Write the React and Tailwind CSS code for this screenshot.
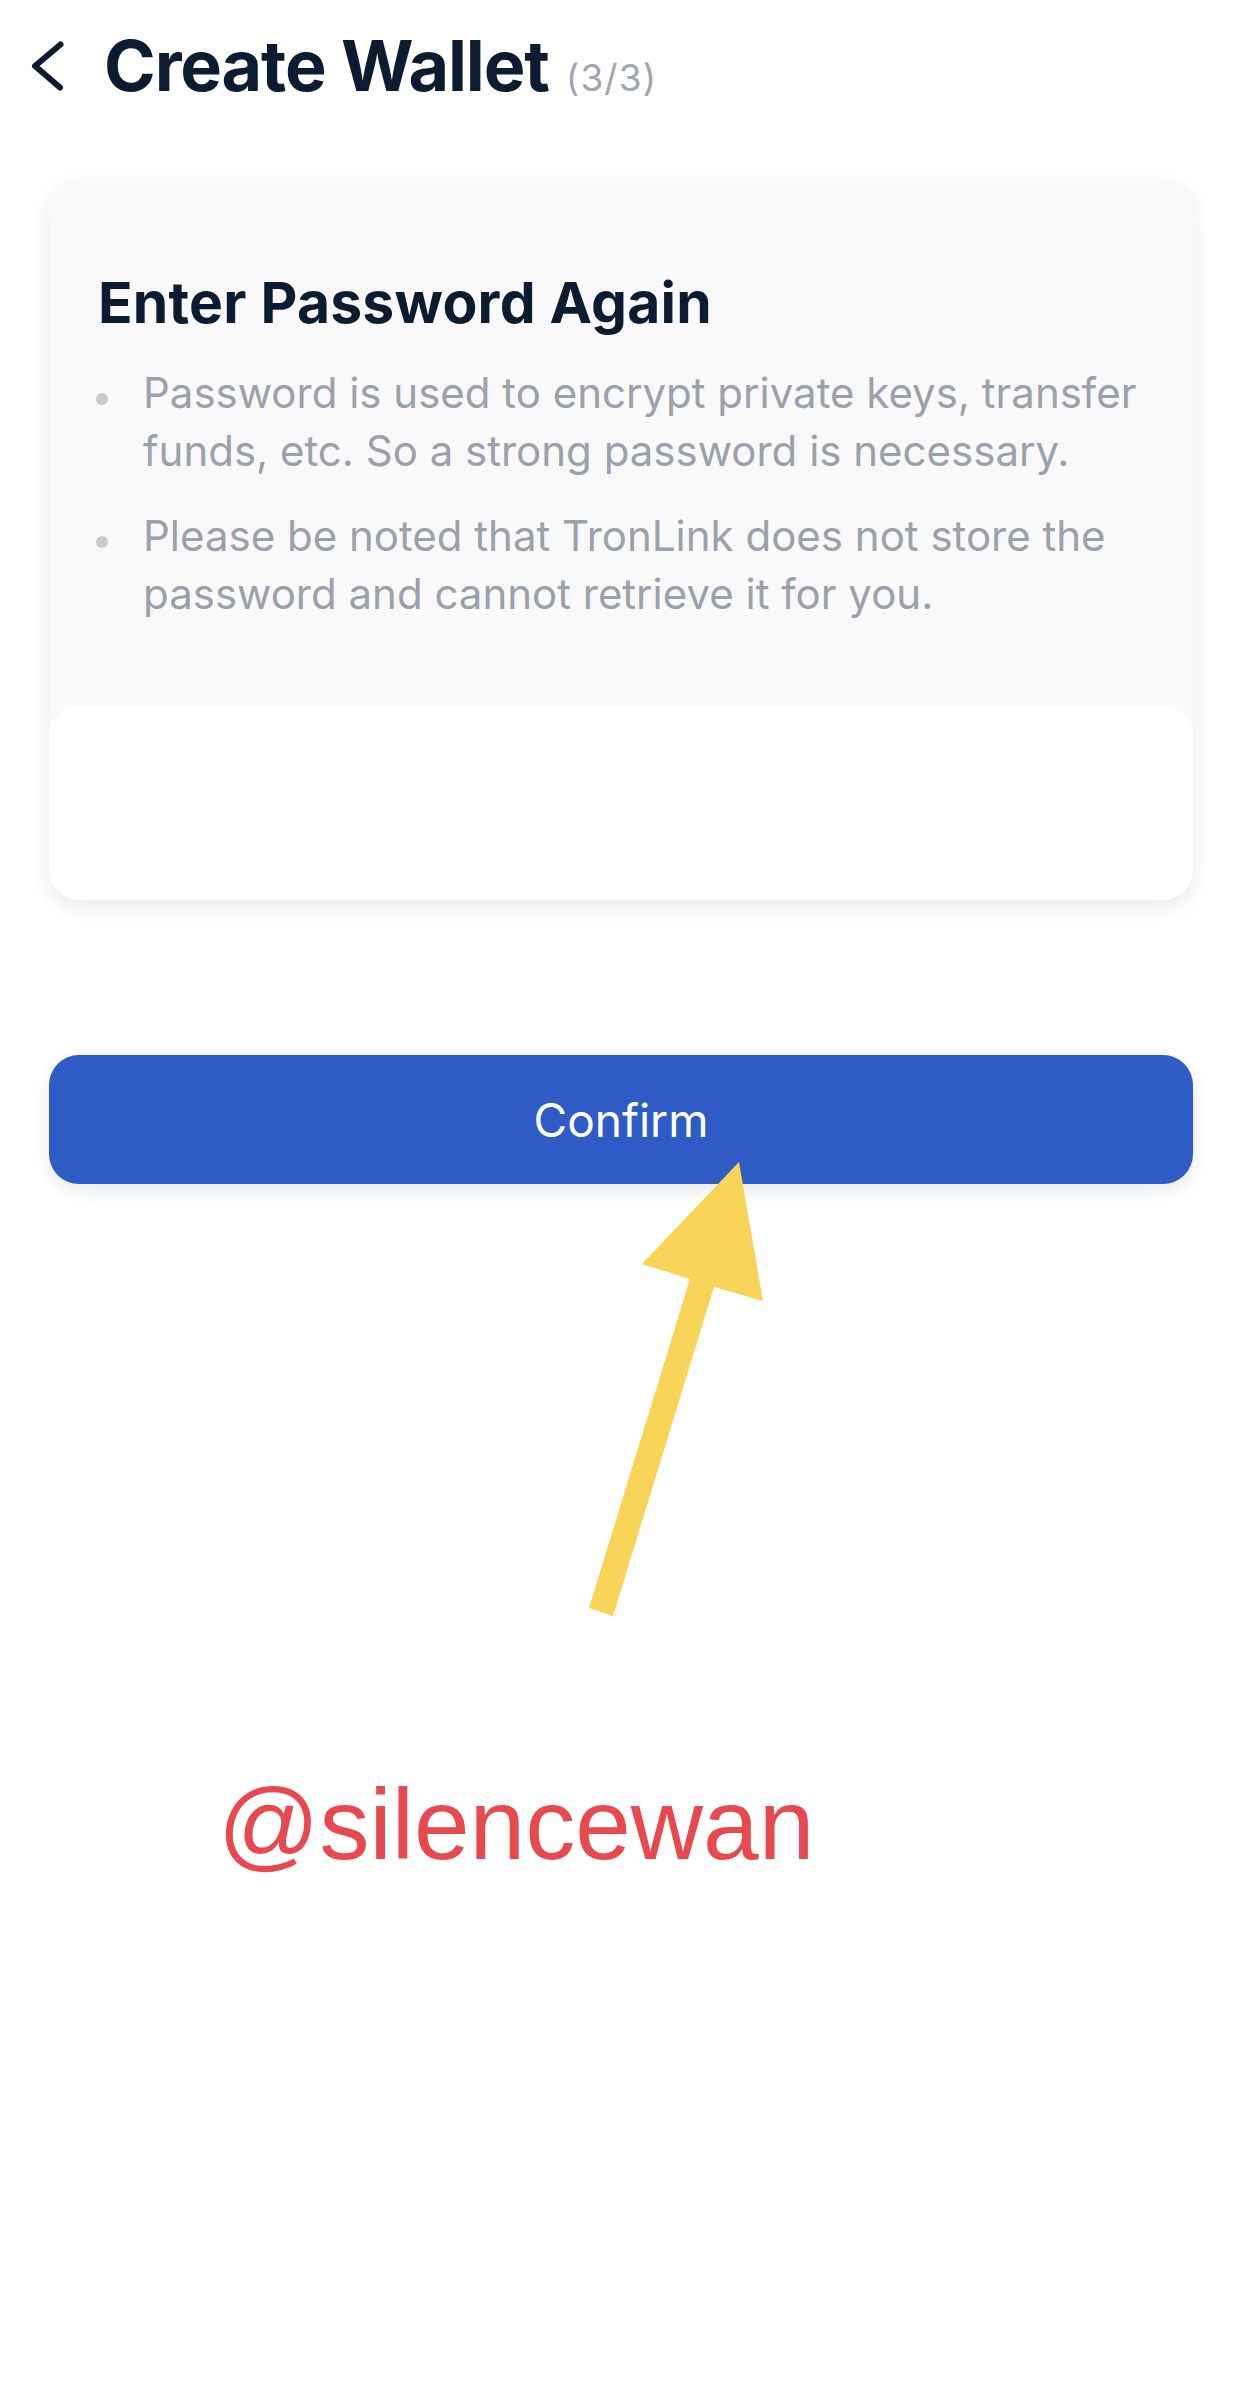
import React from "react";

export default function App() {
  return (
    <div className="relative w-[1242px] min-h-[2402px] bg-white font-['Inter','Noto_Sans',sans-serif]">
      {/* Header */}
      <div className="flex items-center h-[131px]">
        <svg className="ml-[31px] w-[34px] h-[50px] shrink-0" viewBox="0 0 34 50" fill="none">
          <polyline points="29.5,3.5 4,25 29,46.5" stroke="#0c1c30" strokeWidth="6" strokeLinecap="round" strokeLinejoin="round" />
        </svg>
        <div className="ml-[39px] flex items-baseline">
          <span className="text-[70px] leading-none font-bold text-[#0b1c30] tracking-[-0.016em]">Create Wallet</span>
          <span className="ml-[17px] text-[37px] leading-none text-[#a0a6b0] tracking-[0.03em]">(3/3)</span>
        </div>
      </div>

      {/* Card */}
      <div className="mt-[50px] mx-[49px] rounded-[30px] bg-[#f9f9fa] shadow-[0_6px_22px_rgba(20,30,50,0.10)] overflow-hidden">
        <div className="pt-[93px] pl-[49px] pr-[40px]">
          <h2 className="text-[57px] leading-[57px] font-bold text-[#0b1c30] tracking-[0.004em]">Enter Password Again</h2>
          <div className="mt-[33px] flex flex-col gap-[28px] text-[42px] leading-[57.5px] text-[#9ba1aa]">
            <div className="flex">
              <div className="w-[45px] shrink-0 pt-[29px]">
                <div className="ml-[-2px] w-[12px] h-[12px] rounded-full bg-[#c9cacd]" />
              </div>
              <p className="whitespace-nowrap">
                Password is used to encrypt private keys, transfer
                <br />
                funds, etc. So a strong password is necessary.
              </p>
            </div>
            <div className="flex">
              <div className="w-[45px] shrink-0 pt-[29px]">
                <div className="ml-[-2px] w-[12px] h-[12px] rounded-full bg-[#c9cacd]" />
              </div>
              <p className="whitespace-nowrap">
                Please be noted that TronLink does not store the
                <br />
                password and cannot retrieve it for you.
              </p>
            </div>
          </div>
        </div>
        <div className="mt-[84px] h-[194px] rounded-[30px] bg-white" />
      </div>

      {/* Confirm button */}
      <button className="mt-[155px] mx-[49px] w-[1144px] h-[129px] rounded-[30px] bg-[#2e5bc6] shadow-[0_6px_18px_rgba(20,30,50,0.10)] flex items-center justify-center">
        <span className="text-[46px] leading-none text-white">Confirm</span>
      </button>

      {/* Yellow arrow annotation */}
      <svg className="absolute left-0 top-0 pointer-events-none" width="1242" height="2402" viewBox="0 0 1242 2402">
        <polygon
          points="739,1162 763,1301 714,1287 613,1616 589,1608 690,1279 642,1264"
          fill="#f7d358"
        />
      </svg>

      {/* Watermark */}
      <div className="absolute left-[218px] top-[1774px] text-[100px] leading-none text-[#e8494f] font-['Liberation_Sans','Arial',sans-serif]">
        @silencewan
      </div>
    </div>
  );
}
